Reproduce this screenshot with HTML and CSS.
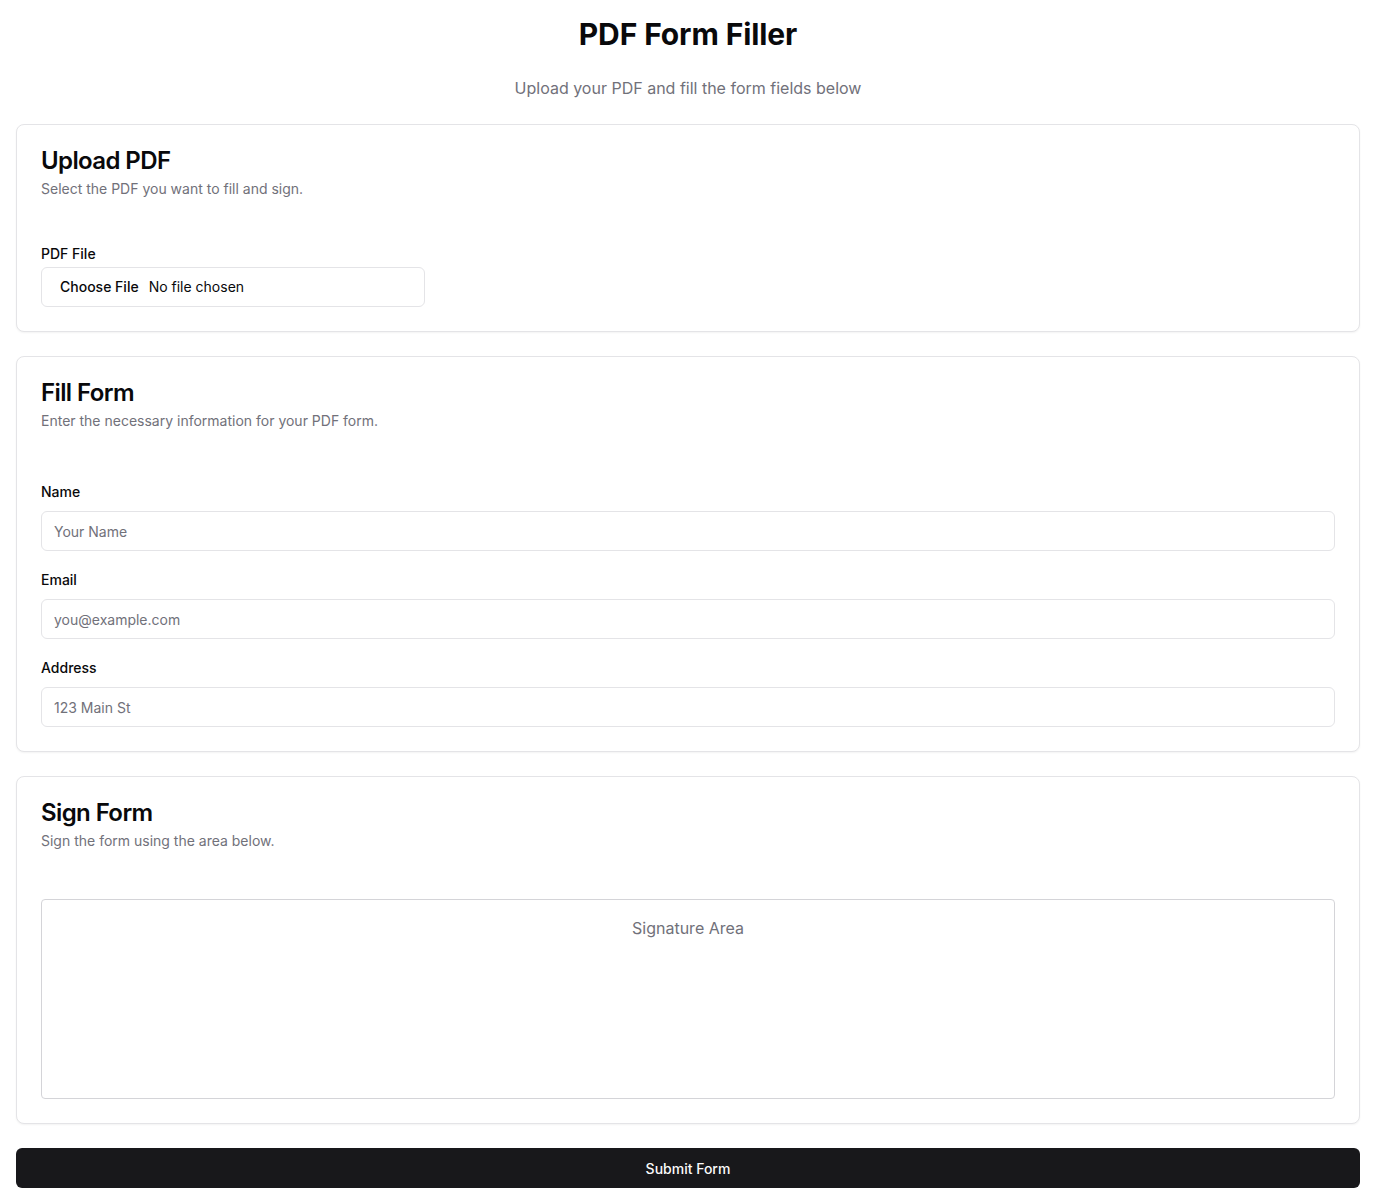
FILE: index.html
```html
<!DOCTYPE html>
<html lang="en">
<head>
<meta charset="utf-8">
<title>PDF Form Filler</title>
<link rel="stylesheet" href="styles.css">
</head>
<body>
<main class="page">
  <header class="page-head">
    <h1 class="page-title">PDF Form Filler</h1>
    <p class="page-sub">Upload your PDF and fill the form fields below</p>
  </header>

  <section class="card">
    <div class="card-head">
      <h2 class="card-title">Upload PDF</h2>
      <p class="card-desc">Select the PDF you want to fill and sign.</p>
    </div>
    <div class="card-body upload-body">
      <label class="label label-tight" for="pdf">PDF File</label>
      <div class="file-input" id="pdf">
        <span class="file-btn">Choose File</span>
        <span class="file-name">No file chosen</span>
      </div>
    </div>
  </section>

  <section class="card">
    <div class="card-head">
      <h2 class="card-title">Fill Form</h2>
      <p class="card-desc">Enter the necessary information for your PDF form.</p>
    </div>
    <div class="card-body form-body">
      <div class="field">
        <label class="label" for="name">Name</label>
        <input class="input" id="name" type="text" placeholder="Your Name">
      </div>
      <div class="field">
        <label class="label" for="email">Email</label>
        <input class="input" id="email" type="email" placeholder="you@example.com">
      </div>
      <div class="field">
        <label class="label" for="address">Address</label>
        <input class="input" id="address" type="text" placeholder="123 Main St">
      </div>
    </div>
  </section>

  <section class="card">
    <div class="card-head">
      <h2 class="card-title">Sign Form</h2>
      <p class="card-desc">Sign the form using the area below.</p>
    </div>
    <div class="card-body sign-body">
      <div class="sig-area">Signature Area</div>
    </div>
  </section>

  <button class="submit" type="button">Submit Form</button>
</main>
</body>
</html>
```

FILE: styles.css
```css
* { box-sizing: border-box; }

html, body {
  margin: 0;
  padding: 0;
  background: #ffffff;
}

body {
  font-family: Inter, "Noto Sans", "Liberation Sans", sans-serif;
  color: #09090b;
}

.page {
  padding: 16px 16px 16px;
  display: flex;
  flex-direction: column;
  gap: 24px;
}

.page-head {
  text-align: center;
  display: flex;
  flex-direction: column;
  gap: 24px;
}

.page-title {
  margin: 0;
  font-size: 30px;
  line-height: 36px;
  font-weight: 700;
  letter-spacing: -0.1px;
}

.page-sub {
  margin: 0;
  font-size: 16px;
  line-height: 24px;
  color: #71717a;
}

.card {
  border: 1px solid #e4e4e7;
  border-radius: 8px;
  background: #fff;
  box-shadow: 0 1px 2px rgba(0, 0, 0, 0.05);
}

.card-head {
  padding: 24px 24px 24px;
  display: flex;
  flex-direction: column;
  gap: 6px;
}

.card-title {
  margin: 0;
  font-size: 24px;
  line-height: 24px;
  font-weight: 600;
  letter-spacing: -0.6px;
}

.card-desc {
  margin: 0;
  font-size: 14px;
  line-height: 20px;
  color: #71717a;
}

.card-body {
  padding: 0 24px 24px;
}

.upload-body {
  padding-top: 21px;
}

.form-body {
  padding-top: 27px;
  display: flex;
  flex-direction: column;
  gap: 19px;
}

.sign-body {
  padding-top: 24px;
}

.field {
  display: flex;
  flex-direction: column;
}

.label {
  display: block;
  font-size: 14px;
  line-height: 20px;
  font-weight: 500;
  margin-bottom: 9px;
}

.label-tight {
  margin-bottom: 3px;
}

.file-input {
  width: 384px;
  height: 40px;
  border: 1px solid #e4e4e7;
  border-radius: 6px;
  display: flex;
  align-items: center;
  padding-left: 18px;
  padding-bottom: 1px;
  font-size: 14px;
}

.file-btn {
  font-weight: 500;
  margin-right: 10px;
}

.file-name {
  color: #09090b;
}

.input {
  width: 100%;
  height: 40px;
  border: 1px solid #e4e4e7;
  border-radius: 6px;
  padding: 0 12px;
  font-family: inherit;
  font-size: 14px;
  color: #09090b;
  background: #fff;
  outline: none;
}

.input::placeholder {
  color: #71717a;
}

.sig-area {
  height: 200px;
  border: 1px solid #d4d4d8;
  border-radius: 4px;
  padding-top: 16px;
  text-align: center;
  font-size: 16px;
  line-height: 24px;
  color: #71717a;
}

.submit {
  height: 40px;
  width: 100%;
  border: 0;
  border-radius: 6px;
  background: #18181b;
  color: #fafafa;
  font-family: inherit;
  font-size: 14px;
  font-weight: 500;
}
```
